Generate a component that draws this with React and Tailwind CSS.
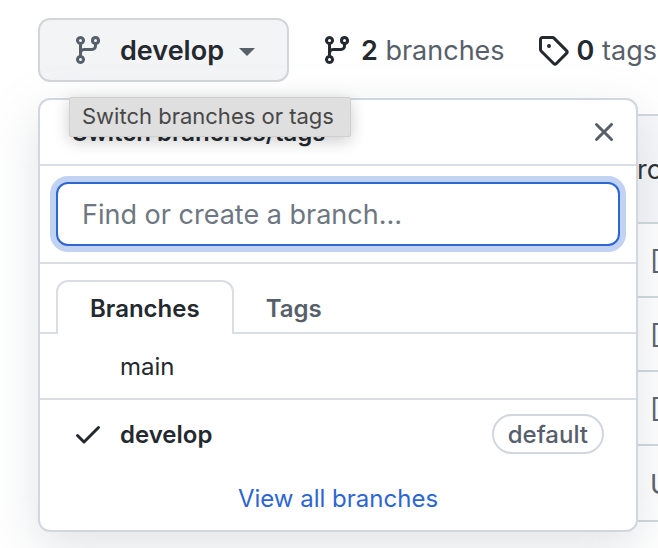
import React from "react";

const PATHS = {
  branch:
    "M11.75 2.5a.75.75 0 100 1.5.75.75 0 000-1.5zm-2.25.75a2.25 2.25 0 113 2.122V6A2.5 2.5 0 0110 8.5H6a1 1 0 00-1 1v1.128a2.251 2.251 0 11-1.5 0V5.372a2.25 2.25 0 111.5 0v1.836A2.492 2.492 0 016 7h4a1 1 0 001-1v-.628A2.25 2.25 0 019.5 3.25zM4.25 12a.75.75 0 100 1.5.75.75 0 000-1.5zM3.5 3.25a.75.75 0 111.5 0 .75.75 0 01-1.5 0z",
  tag: "M2.5 7.775V2.75a.25.25 0 01.25-.25h5.025a.25.25 0 01.177.073l6.25 6.25a.25.25 0 010 .354l-5.025 5.025a.25.25 0 01-.354 0l-6.25-6.25a.25.25 0 01-.073-.177zm-1.5 0V2.75C1 1.784 1.784 1 2.75 1h5.025c.464 0 .91.184 1.238.513l6.25 6.25a1.75 1.75 0 010 2.474l-5.026 5.026a1.75 1.75 0 01-2.474 0l-6.25-6.25A1.75 1.75 0 011 7.775zM6 5a1 1 0 100 2 1 1 0 000-2z",
  close:
    "M3.72 3.72a.75.75 0 011.06 0L8 6.94l3.22-3.22a.75.75 0 111.06 1.06L9.06 8l3.22 3.22a.75.75 0 11-1.06 1.06L8 9.06l-3.22 3.22a.75.75 0 01-1.06-1.06L6.94 8 3.72 4.78a.75.75 0 010-1.06z",
  check:
    "M13.78 4.22a.75.75 0 010 1.06l-7.25 7.25a.75.75 0 01-1.06 0L2.22 9.28a.75.75 0 011.06-1.06L6 10.94l6.72-6.72a.75.75 0 011.06 0z",
};

function Icon({ name, className }) {
  return (
    <svg viewBox="0 0 16 16" className={`size-8 shrink-0 ${className}`} fill="currentColor" fillRule="evenodd" aria-hidden="true">
      <path d={PATHS[name]} />
    </svg>
  );
}

function Count({ icon, value, label }) {
  return (
    <a href="#" className="flex shrink-0 items-center gap-2 whitespace-nowrap text-[#57606a]">
      <Icon name={icon} className="text-[#24292f]" />
      <span className="pt-0.5">
        <strong className="font-semibold text-[#24292f]">{value}</strong> {label}
      </span>
    </a>
  );
}

function Toolbar() {
  return (
    <div className="flex items-center gap-8 text-[27px]">
      <button
        type="button"
        aria-haspopup="menu"
        aria-expanded="true"
        className="flex h-16 shrink-0 items-center rounded-xl border-2 border-[#d3d5d8] bg-[#f3f4f6] px-8 font-semibold text-[#24292f]"
      >
        <Icon name="branch" className="mr-4 text-[#57606a]" />
        <span className="pt-0.5">develop</span>
        <span className="mt-1 ml-[15px] border-x-8 border-t-8 border-x-transparent border-t-[#57606a]" />
      </button>
      <Count icon="branch" value="2" label="branches" />
      <Count icon="tag" value="0" label="tags" />
    </div>
  );
}

function FileList() {
  return (
    <div className="mt-8 overflow-hidden whitespace-nowrap border-y-2 border-[#d0d7de] text-[27px] text-[#57606a]">
      <div className="flex h-[106px] items-center bg-[#f6f8fa] pt-0.5 pl-[599px] text-[#24292f]">ro</div>
      {["[D", "[D", "[D", "U"].map((text, i) => (
        <div key={i} className="flex h-[74px] items-center border-t-2 border-[#d0d7de] pt-1 pl-[612px] last:h-19">
          {text}
        </div>
      ))}
    </div>
  );
}

function BranchMenu() {
  return (
    <section
      aria-label="Switch branches/tags"
      className="absolute top-20 left-0 w-[600px] overflow-hidden rounded-xl border-2 border-[#d0d7de] bg-white text-2xl text-[#24292f] shadow-[0_16px_48px_rgba(140,149,159,0.25)]"
    >
      <header className="flex h-[66px] items-center justify-between border-b-2 border-[#d8dee4] px-4 pl-8">
        <h2 className="pt-0.5 font-semibold">Switch branches/tags</h2>
        <button type="button" aria-label="Close menu" className="text-[#57606a]">
          <Icon name="close" className="" />
        </button>
      </header>
      <div className="border-b-2 border-[#d8dee4] p-4">
        <input
          type="text"
          aria-label="Find or create a branch"
          placeholder="Find or create a branch…"
          className="h-16 w-full rounded-xl border-2 border-[#2c66d3] bg-white px-6 text-[27px] shadow-[0_0_0_6px_#c1d2f3] outline-none placeholder:text-[#6e7781]"
        />
      </div>
      <div role="tablist" className="flex items-end pt-4">
        <div className="w-4 self-stretch border-b-2 border-[#d8dee4]" />
        <button
          type="button"
          role="tab"
          aria-selected="true"
          className="h-[54px] rounded-t-xl border-2 border-b-0 border-[#d8dee4] px-8 pt-0.5 font-semibold"
        >
          Branches
        </button>
        <div className="flex h-[54px] grow border-b-2 border-[#d8dee4]">
          <button type="button" role="tab" aria-selected="false" className="px-8 pt-1.5 font-semibold text-[#57606a]">
            Tags
          </button>
        </div>
      </div>
      <button type="button" className="flex h-[66px] w-full items-center border-b-2 border-[#d8dee4] pt-0.5 pl-20">
        main
      </button>
      <button type="button" className="flex h-[70px] w-full items-center px-8 pb-0.5 font-semibold">
        <Icon name="check" className="mr-4" />
        <span className="pt-0.5">develop</span>
        <span className="ml-auto flex h-10 items-center rounded-full border-2 border-[#d0d7de] px-3.5 pt-0.5 font-medium text-[#57606a]">
          default
        </span>
      </button>
      <footer className="flex h-[60px] items-center justify-center pb-0.5">
        <a href="#" className="text-[#2c66d3]">
          View all branches
        </a>
      </footer>
    </section>
  );
}

export default function App() {
  return (
    <main className="min-h-screen overflow-hidden bg-white pt-[18px] pb-6 pl-[38px] font-[Inter,sans-serif]">
      <div className="relative">
        <Toolbar />
        <FileList />
        <BranchMenu />
        <div
          role="tooltip"
          className="absolute top-[79px] left-[31px] flex h-10 items-center rounded-xs border border-[#cfcfcf] bg-[#dfdfdf] pr-4 pb-0.5 pl-3 text-[22px] whitespace-nowrap text-[#474747] shadow-[0_4px_16px_rgba(0,0,0,0.2)]"
        >
          Switch branches or tags
        </div>
      </div>
    </main>
  );
}
